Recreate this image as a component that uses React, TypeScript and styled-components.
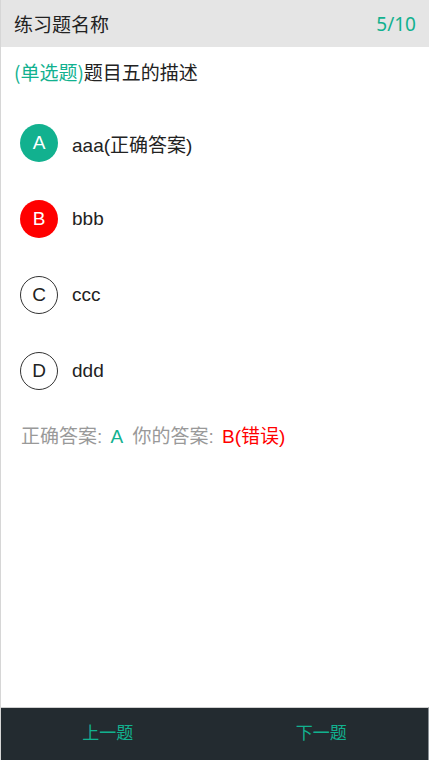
import React from "react";
import styled, { createGlobalStyle } from "styled-components";

const Global = createGlobalStyle`
  html, body, #root { height: 100%; }
  body {
    margin: 0;
    font-family: "Liberation Sans", "Noto Sans CJK SC", sans-serif;
    background: #fff;
  }
`;

const teal = "#12b18f";

const Page = styled.div`
  height: 100%;
  display: flex;
  flex-direction: column;
  box-sizing: border-box;
  border-left: 1px solid #d6d6d6;
`;

const Header = styled.header`
  height: 47px;
  flex: none;
  background: #e5e5e5;
  display: flex;
  align-items: center;
  justify-content: space-between;
  padding: 0 13px 0 13px;
  font-size: 19px;
`;

const Title = styled.span`
  color: #222;
  font-family: "Noto Sans CJK SC", sans-serif;
`;

const Progress = styled.span`
  color: ${teal};
  font-family: "Noto Sans", "Noto Sans CJK SC", sans-serif;
`;

const Main = styled.main`
  flex: 1;
  display: flex;
  flex-direction: column;
  padding: 0 0 0 13px;
`;

const Question = styled.div`
  font-family: "Noto Sans CJK SC", sans-serif;
  font-size: 19px;
  color: #222;
  line-height: 26px;
  margin-top: 12px;
`;

const Tag = styled.span`
  color: ${teal};
`;

const Options = styled.div`
  display: flex;
  flex-direction: column;
  gap: 38px;
  margin-top: 39px;
  padding-left: 6px;
`;

const Option = styled.div`
  display: flex;
  align-items: center;
  gap: 14px;
  font-size: 19px;
  color: #222;
`;

type Status = "right" | "wrong" | "none";

const Letter = styled.div<{ $status: Status }>`
  width: 38px;
  height: 38px;
  box-sizing: border-box;
  border-radius: 50%;
  display: flex;
  align-items: center;
  justify-content: center;
  font-size: 19px;
  color: ${(p) => (p.$status === "none" ? "#222" : "#fff")};
  background: ${(p) =>
    p.$status === "right" ? teal : p.$status === "wrong" ? "#ff0000" : "#fff"};
  border: ${(p) => (p.$status === "none" ? "1px solid #333" : "none")};
`;

const OptionText = styled.span`
  font-family: "Liberation Sans", "Noto Sans CJK SC", sans-serif;
`;

const Result = styled.div`
  margin-top: 34px;
  padding-left: 7px;
  font-size: 19px;
  line-height: 26px;
  color: #999;
  font-family: "Liberation Sans", "Noto Sans CJK SC", sans-serif;
  white-space: pre;
`;

const Accent = styled.span<{ $color: string }>`
  color: ${(p) => p.$color};
  margin-left: 3px;
  margin-right: 4px;
`;

const Footer = styled.footer`
  flex: none;
  height: 52px;
  background: #232b30;
  border-top: 1px solid #cfcfcf;
  border-right: 1px solid #8a9196;
  display: grid;
  grid-template-columns: 1fr 1fr;
`;

const NavButton = styled.button`
  background: none;
  border: none;
  color: ${teal};
  font-size: 17px;
  font-family: "Noto Sans CJK SC", sans-serif;
  cursor: pointer;
  display: flex;
  align-items: center;
  justify-content: center;
  padding: 0 0 5px 0;
`;

const options: { key: string; text: string; status: Status }[] = [
  { key: "A", text: "aaa(正确答案)", status: "right" },
  { key: "B", text: "bbb", status: "wrong" },
  { key: "C", text: "ccc", status: "none" },
  { key: "D", text: "ddd", status: "none" },
];

export default function App() {
  return (
    <>
      <Global />
      <Page>
        <Header>
          <Title>练习题名称</Title>
          <Progress>5/10</Progress>
        </Header>
        <Main>
          <Question>
            <Tag>(单选题)</Tag>题目五的描述
          </Question>
          <Options>
            {options.map((o) => (
              <Option key={o.key}>
                <Letter $status={o.status}>{o.key}</Letter>
                <OptionText>{o.text}</OptionText>
              </Option>
            ))}
          </Options>
          <Result>
            {"正确答案: "}
            <Accent $color={teal}>A</Accent>
            {" 你的答案: "}
            <Accent $color="#ff0000">B(错误)</Accent>
          </Result>
        </Main>
        <Footer>
          <NavButton>上一题</NavButton>
          <NavButton>下一题</NavButton>
        </Footer>
      </Page>
    </>
  );
}
